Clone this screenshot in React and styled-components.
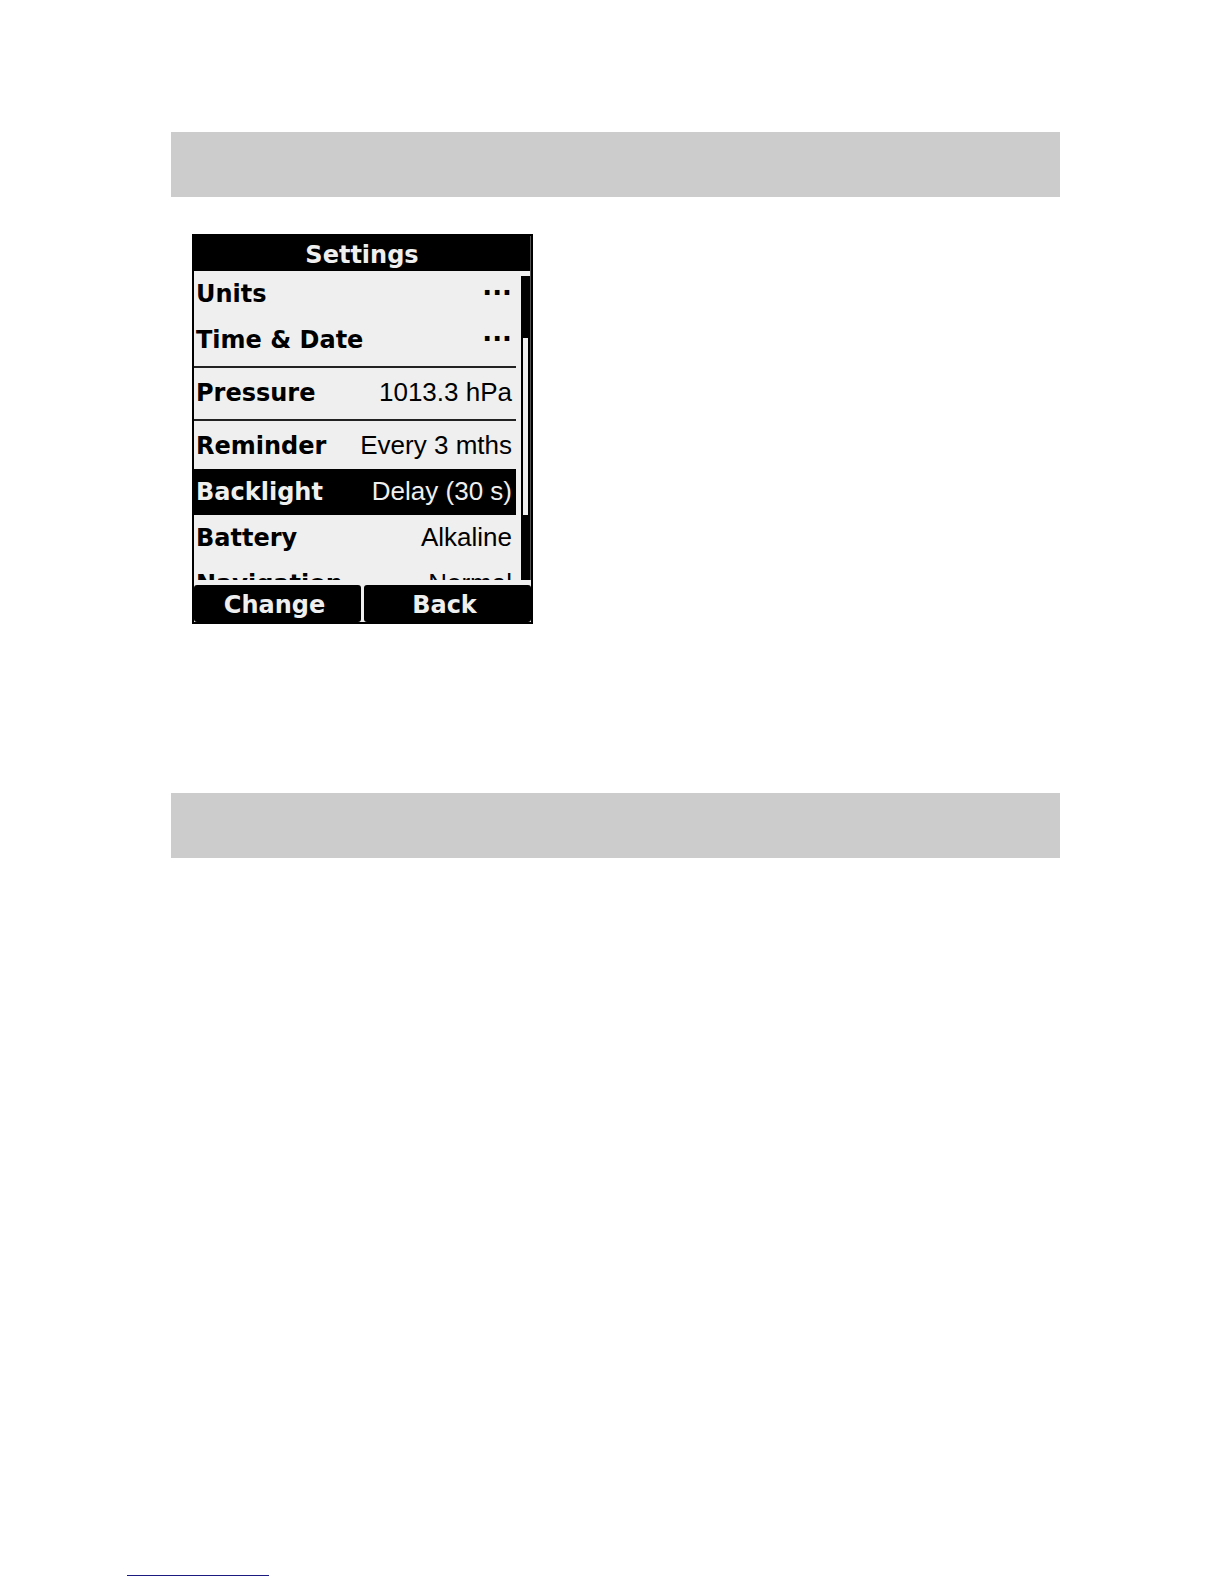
import React from 'react'
import styled, { createGlobalStyle } from 'styled-components'

const INK = '#000000'
const PAPER = '#efefef'

const groups = [
  [
    { label: 'Units', value: '···', more: true },
    { label: 'Time & Date', value: '···', more: true },
  ],
  [{ label: 'Pressure', value: '1013.3 hPa' }],
  [
    { label: 'Reminder', value: 'Every 3 mths' },
    { label: 'Backlight', value: 'Delay (30 s)', selected: true },
    { label: 'Battery', value: 'Alkaline' },
    { label: 'Navigation', value: 'Normal' },
  ],
]

function App() {
  return (
    <Page>
      <GlobalStyle />
      <Main>
        <Band />
        <Device>
          <Screen>
            <Title>Settings</Title>
            <Body>
              <Menu>
                {groups.map((rows) => (
                  <Group key={rows[0].label}>
                    {rows.map((row) => (
                      <li key={row.label}>
                        <Row type="button" $selected={row.selected}>
                          <Label>{row.label}</Label>
                          <Value $more={row.more}>{row.value}</Value>
                        </Row>
                      </li>
                    ))}
                  </Group>
                ))}
              </Menu>
              <Track>
                <Thumb />
              </Track>
            </Body>
            <SoftKeys>
              <SoftKey type="button">Change</SoftKey>
              <SoftKey type="button">Back</SoftKey>
            </SoftKeys>
          </Screen>
        </Device>
        <Band />
      </Main>
      <Footer>
        <FooterLink href="#" aria-label="Website" />
      </Footer>
    </Page>
  )
}

const GlobalStyle = createGlobalStyle`
  * {
    box-sizing: border-box;
  }

  body {
    margin: 0;
    background: #ffffff;
  }
`

const Page = styled.div`
  min-height: 100vh;
  display: flex;
  flex-direction: column;
`

const Main = styled.main`
  padding: 132px 164px 0 171px;
`

const Band = styled.div`
  height: 65px;
  background: #cccccc;
`

const Device = styled.section`
  display: flex;
  padding: 37px 21px 169px;
`

const Screen = styled.div`
  width: 341px;
  border: 2px solid ${INK};
  background: ${PAPER};
  color: ${INK};
  font-family: 'DejaVu Sans', sans-serif;
  font-size: 24px;
  font-weight: bold;
`

const Title = styled.h1`
  margin: 0;
  height: 35px;
  background: ${INK};
  border-right: 1px solid #555555;
  color: ${PAPER};
  font-size: 24px;
  line-height: 38px;
  text-align: center;
`

const Body = styled.div`
  display: flex;
  gap: 5px;
  height: 309px;
  border-right: 1px solid #555555;
`

const Menu = styled.div`
  flex: 1;
  overflow: hidden;
`

const Group = styled.ul`
  margin: 0;
  padding: 0;
  list-style: none;

  & + & {
    margin-top: 3px;
    padding-top: 2px;
    border-top: 2px solid #222222;
  }
`

const Row = styled.button`
  display: flex;
  align-items: baseline;
  justify-content: space-between;
  width: 100%;
  height: 46px;
  padding: 0 4px 2px 2px;
  border: 0;
  background: ${(props) => (props.$selected ? INK : PAPER)};
  color: ${(props) => (props.$selected ? PAPER : INK)};
  font: inherit;
  line-height: 44px;
  white-space: nowrap;
`

const Label = styled.span`
  flex: none;
`

const Value = styled.span`
  font-family: ${(props) =>
    props.$more ? "'DejaVu Sans', sans-serif" : "'Liberation Sans', sans-serif"};
  font-size: 26px;
  font-weight: ${(props) => (props.$more ? 'bold' : 'normal')};
`

const Track = styled.div`
  width: 9px;
  margin-top: 5px;
  padding: 62px 2px 0;
  background: ${INK};
`

const Thumb = styled.div`
  height: 177px;
  background: ${PAPER};
`

const SoftKeys = styled.div`
  display: flex;
  gap: 3px;
  padding-top: 5px;
`

const SoftKey = styled.button`
  flex: 1;
  height: 37px;
  padding: 0 6px 0 0;
  border: 0;
  border-radius: 3px;
  background: ${INK};
  color: ${PAPER};
  font: inherit;
  line-height: 40px;
`

const Footer = styled.footer`
  display: flex;
  margin-top: auto;
  padding: 0 127px 8px;
`

const FooterLink = styled.a`
  width: 142px;
  border-bottom: 1px solid #1a1a80;
`

export default App
